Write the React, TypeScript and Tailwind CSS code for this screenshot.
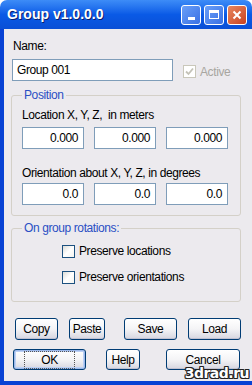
import React from 'react'

const font = "font-['Liberation_Sans',Arial,sans-serif]"

function TextBox({ value, className = '' }: { value: string; className?: string }) {
    return (
        <div className={`h-[22px] bg-white border border-[#7f9db9] flex items-center ${className}`}>
            {value}
        </div>
    )
}

function CheckBox({ checked = false, disabled = false }: { checked?: boolean; disabled?: boolean }) {
    return (
        <div
            className={`w-[13px] h-[13px] border flex items-center justify-center ${
                disabled
                    ? 'border-[#c9c7ba] bg-white'
                    : 'border-[#1c5180] bg-gradient-to-br from-[#dcdcd7] via-white to-[#f4f4f0]'
            }`}
        >
            {checked && (
                <svg width="9" height="9" viewBox="0 0 9 9">
                    <path d="M1 4.5 L3.5 7 L8 1.5" fill="none" stroke={disabled ? '#c4c2b8' : '#21a121'} strokeWidth="1.8" />
                </svg>
            )}
        </div>
    )
}

function Btn({ label, w, h = 22, def = false }: { label: string; w: number; h?: number; def?: boolean }) {
    return (
        <div
            style={{ width: w, height: h }}
            className={`rounded-[3px] border border-[#003c74] bg-gradient-to-b from-white via-[#f4f4f6] to-[#d6d6e0] flex items-center justify-center text-[#000] ${
                def ? 'shadow-[inset_0_0_0_1px_#9cb8ea,inset_0_0_0_2px_#bcd0f4]' : 'shadow-[inset_0_-1px_0_#c0c0d0]'
            }`}
        >
            <span className={def ? 'outline outline-1 outline-dotted outline-[#555] outline-offset-[2px] px-[14px] leading-[12px]' : ''}>
                {label}
            </span>
        </div>
    )
}

export default function App() {
    return (
        <div className={`relative w-[252px] h-[385px] flex flex-col ${font} text-[12px] tracking-[-0.4px] text-black overflow-hidden`}>
            {/* Title bar */}
            <div className="h-[29px] shrink-0 rounded-t-[7px] bg-gradient-to-b from-[#3d8cf7] via-[#0a5ae6] to-[#0a4fd6] flex items-center pl-[7px] pr-[5px]">
                <span className="text-white font-bold text-[14px] tracking-normal [text-shadow:1px_1px_0_#0a1e6e] flex-1">
                    Group v1.0.0.0
                </span>
                <div className="flex gap-[3px]">
                    <div className="w-[20px] h-[20px] rounded-[3px] border border-white bg-gradient-to-br from-[#6a9ff8] to-[#3a70e4] flex items-end justify-center pb-[4px]">
                        <div className="w-[7px] h-[3px] bg-white" />
                    </div>
                    <div className="w-[20px] h-[20px] rounded-[3px] border border-white bg-gradient-to-br from-[#6a9ff8] to-[#3a70e4] flex items-center justify-center">
                        <div className="w-[10px] h-[9px] border border-white border-t-[3px]" />
                    </div>
                    <div className="w-[20px] h-[20px] rounded-[3px] border border-white bg-gradient-to-br from-[#e8875f] to-[#c8401e] flex items-center justify-center">
                        <svg width="10" height="10" viewBox="0 0 10 10">
                            <path d="M1.5 1.5 L8.5 8.5 M8.5 1.5 L1.5 8.5" stroke="white" strokeWidth="2" />
                        </svg>
                    </div>
                </div>
            </div>

            {/* Window body */}
            <div className="flex-1 bg-[#0842d4] px-[4px] pb-[4px] flex">
                <div className="flex-1 bg-[#eceaee] flex flex-col pl-[7px] pr-[12px]">
                    <div className="mt-[10px] ml-[2px] leading-[14px]">Name:</div>
                    <div className="mt-[6px] flex items-center ml-[1px]">
                        <TextBox value="Group 001" className="w-[161px] pl-[4px]" />
                        <div className="ml-[10px] mt-[3px] flex items-center gap-[4px] text-[#a8a6a0]">
                            <CheckBox checked disabled />
                            <span>Active</span>
                        </div>
                    </div>

                    {/* Position */}
                    <fieldset className="mt-[7px] border border-[#d4d0c8] rounded-[3px]">
                        <legend className="ml-[10px] px-[2px] leading-[14px] text-[#2a4fc4]">Position</legend>
                        <div className="pl-[10px] pr-[8px] pb-[10px]">
                            <div className="mt-[6px] leading-[14px]">Location&nbsp;X, Y, Z, &nbsp;in meters</div>
                            <div className="mt-[5px] flex gap-[10px]">
                                <TextBox value="0.000" className="w-[62px] justify-end pr-[5px]" />
                                <TextBox value="0.000" className="w-[62px] justify-end pr-[5px]" />
                                <TextBox value="0.000" className="w-[62px] justify-end pr-[5px]" />
                            </div>
                            <div className="mt-[17px] leading-[14px]">Orientation about&nbsp;X, Y, Z, in degrees</div>
                            <div className="mt-[3px] flex gap-[10px]">
                                <TextBox value="0.0" className="w-[62px] justify-end pr-[5px]" />
                                <TextBox value="0.0" className="w-[62px] justify-end pr-[5px]" />
                                <TextBox value="0.0" className="w-[62px] justify-end pr-[5px]" />
                            </div>
                        </div>
                    </fieldset>

                    {/* On group rotations */}
                    <fieldset className="mt-[5px] border border-[#d4d0c8] rounded-[3px]">
                        <legend className="ml-[10px] px-[2px] leading-[14px] text-[#2a4fc4]">On group rotations:</legend>
                        <div className="pl-[50px] pb-[17px]">
                            <div className="mt-[10px] flex items-center gap-[4px] leading-[13px]">
                                <CheckBox />
                                <span>Preserve locations</span>
                            </div>
                            <div className="mt-[13px] flex items-center gap-[4px] leading-[13px]">
                                <CheckBox />
                                <span>Preserve orientations</span>
                            </div>
                        </div>
                    </fieldset>

                    {/* Buttons */}
                    <div className="mt-[16px] flex ml-[4px]">
                        <Btn label="Copy" w={43} />
                        <div className="ml-[11px]"><Btn label="Paste" w={36} /></div>
                        <div className="ml-[19px]"><Btn label="Save" w={53} /></div>
                        <div className="ml-[11px]"><Btn label="Load" w={53} /></div>
                    </div>
                    <div className="mt-[9px] flex ml-[2px]">
                        <Btn label="OK" w={73} h={21} def />
                        <div className="ml-[20px]"><Btn label="Help" w={34} h={21} /></div>
                        <div className="ml-[26px]"><Btn label="Cancel" w={74} h={21} /></div>
                    </div>
                </div>
            </div>

            {/* watermark */}
            <span className="absolute right-[3px] bottom-[1px] font-['DejaVu_Sans',sans-serif] font-bold text-[14px] tracking-[-0.5px] text-white [text-shadow:1px_0_0_#222,-1px_0_0_#222,0_1px_0_#222,0_-1px_0_#222,1px_1px_0_#222,-1px_-1px_0_#222,1px_-1px_0_#222,-1px_1px_0_#222]">
                3drad.ru
            </span>
        </div>
    )
}
